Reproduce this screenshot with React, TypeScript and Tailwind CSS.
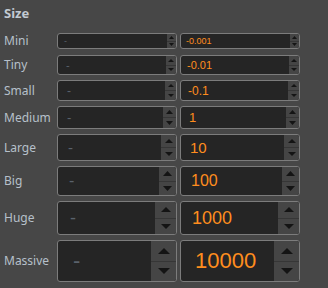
import React from "react";

type Row = {
  label: string;
  value: string;
  box: string;
  spin: string;
  text: string;
  padV: string;
  padD: string;
  tri: number;
};

const rows: Row[] = [
  { label: "Mini", value: "-0.001", box: "h-[16px]", spin: "w-[9px]", text: "text-[9px]", padV: "pl-[5px]", padD: "pl-[6px]", tri: 5 },
  { label: "Tiny", value: "-0.01", box: "h-[20px]", spin: "w-[10px]", text: "text-[11px]", padV: "pl-[6px]", padD: "pl-[8px]", tri: 6 },
  { label: "Small", value: "-0.1", box: "h-[21px]", spin: "w-[11px]", text: "text-[12px]", padV: "pl-[7px]", padD: "pl-[9px]", tri: 6 },
  { label: "Medium", value: "1", box: "h-[23px]", spin: "w-[13px]", text: "text-[13px]", padV: "pl-[8px]", padD: "pl-[9px]", tri: 7 },
  { label: "Large", value: "10", box: "h-[27px]", spin: "w-[15px]", text: "text-[15px]", padV: "pl-[9px]", padD: "pl-[10px]", tri: 8 },
  { label: "Big", value: "100", box: "h-[30px]", spin: "w-[17px]", text: "text-[16px]", padV: "pl-[10px]", padD: "pl-[11px]", tri: 9 },
  { label: "Huge", value: "1000", box: "h-[34px]", spin: "w-[21px]", text: "text-[18px]", padV: "pl-[11px]", padD: "pl-[12px]", tri: 10 },
  { label: "Massive", value: "10000", box: "h-[42px]", spin: "w-[25px]", text: "text-[22px]", padV: "pl-[14px]", padD: "pl-[15px]", tri: 12 },
];

function Arrow({ size, up }: { size: number; up?: boolean }) {
  const h = Math.max(3, Math.round(size / 2));
  return (
    <svg width={size} height={h} viewBox={`0 0 ${size} ${h}`} className="block">
      <polygon
        points={up ? `0,${h} ${size / 2},0 ${size},${h}` : `0,0 ${size},0 ${size / 2},${h}`}
        fill="#141414"
      />
    </svg>
  );
}

function Spinner({ row }: { row: Row }) {
  return (
    <div className={`${row.spin} flex flex-col bg-[#454545] shrink-0`}>
      <div className="flex-1 flex items-center justify-center border-b border-[#363636]">
        <Arrow size={row.tri} up />
      </div>
      <div className="flex-1 flex items-center justify-center">
        <Arrow size={row.tri} />
      </div>
    </div>
  );
}

function Field({ row, empty }: { row: Row; empty?: boolean }) {
  return (
    <div
      className={`${row.box} w-[120px] flex rounded-[3px] border border-[#7c7c7c] bg-[#252525] overflow-hidden`}
    >
      <div
        className={`flex-1 flex items-center ${row.text} ${empty ? row.padD : row.padV} font-['Liberation_Sans',Arial,sans-serif] leading-none`}
      >
        {empty ? (
          <span className="text-[#5a626c]">-</span>
        ) : (
          <span className="text-[#ff8d1e]">{row.value}</span>
        )}
      </div>
      <Spinner row={row} />
    </div>
  );
}

export default function App() {
  return (
    <div className="w-[328px] h-[288px] bg-[#474747] pl-[4px] pt-[4px] font-['Noto_Sans',sans-serif] overflow-hidden">
      <div className="h-[20px] flex items-center text-[13px] font-bold text-[#c2cad2]">Size</div>
      <div className="mt-[8px] flex flex-col gap-[5px]">
        {rows.map((row) => (
          <div key={row.label} className="flex items-center">
            <div className="w-[53px] text-[12px] text-[#b6c0ca]">{row.label}</div>
            <div className="flex gap-[3px]">
              <Field row={row} empty />
              <Field row={row} />
            </div>
          </div>
        ))}
      </div>
    </div>
  );
}
